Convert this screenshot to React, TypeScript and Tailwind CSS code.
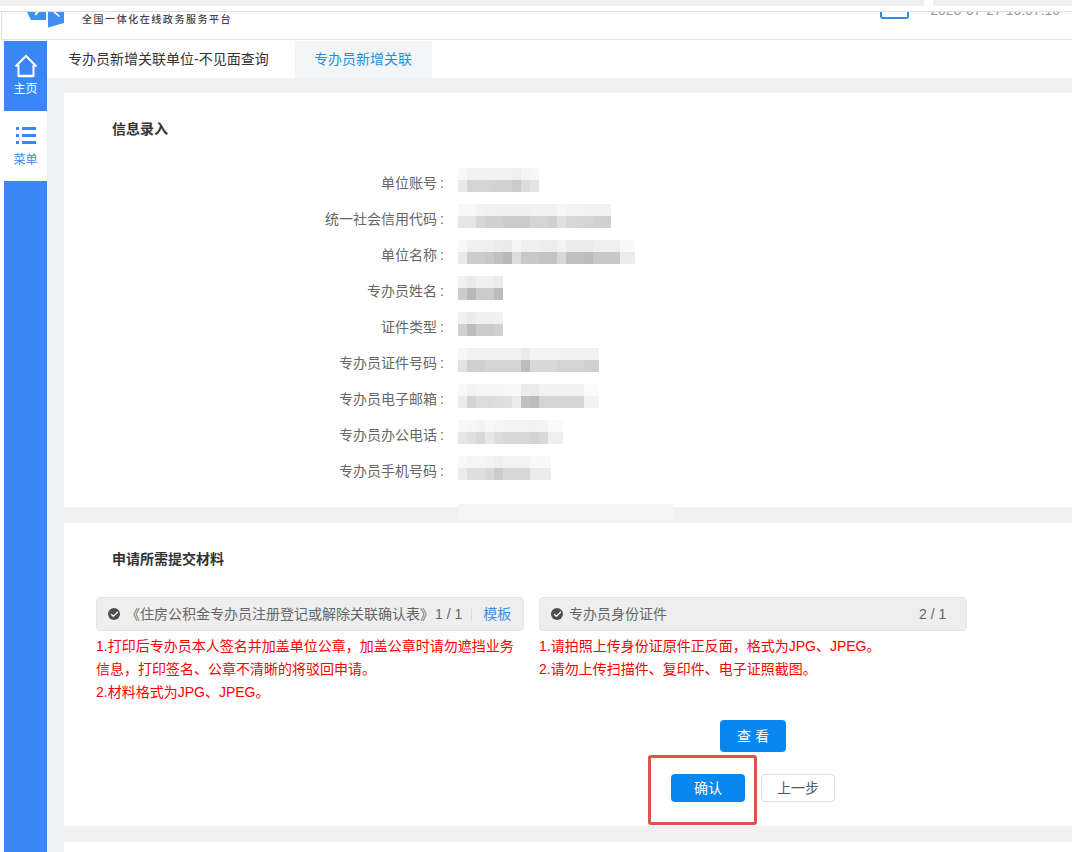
import { Check } from "lucide-react";

const rows = [
  { label: "单位账号", width: 81, cells: "e9 d4 d4 d4 d2 d2 cb dc e4" },
  { label: "统一社会信用代码", width: 153, cells: "e6 e6 d8 d0 d0 cc cc cc d4 d4 d0 e0 d8 d6 d4 d0 d0" },
  { label: "单位名称", width: 177, cells: "ea cc cc c8 c0 b8 dc c8 c8 c4 c4 d8 c0 c0 bc c8 c8 c8 ec ec" },
  { label: "专办员姓名", width: 45, cells: "cc b8 cc cc bc" },
  { label: "证件类型", width: 45, cells: "d0 bc cc cc d0" },
  { label: "专办员证件号码", width: 141, cells: "e2 d0 d0 d4 d4 d4 d4 bc d8 d8 d8 d4 d4 d4 d0 d0" },
  { label: "专办员电子邮箱", width: 141, cells: "ec d4 dc dc de e0 ec c0 bc d4 d4 d4 d4 d4 f2 f2" },
  { label: "专办员办公电话", width: 105, cells: "e6 e0 d8 e8 dc d8 d8 d8 d4 d8 ee ee" },
  { label: "专办员手机号码", width: 93, cells: "ec de de d8 cc d8 d8 d8 ec ec ec" },
];

const tone = (hex: string, top: boolean) => {
  const v = parseInt(hex, 16);
  const g = top ? Math.round(255 - (255 - v) * 0.3) : v;
  return `rgb(${g},${g},${g})`;
};

function BlurValue({ cells, width }: { cells: string; width: number }) {
  const list = cells.split(" ");
  return (
    <div className="ml-[14px] mt-[3px] h-[24px] overflow-hidden" style={{ width }}>
      <div className="flex">
        {list.map((c, i) => (
          <div key={i} className="w-[9px] h-[12px] shrink-0" style={{ backgroundColor: tone(c, true) }} />
        ))}
      </div>
      <div className="flex">
        {list.map((c, i) => (
          <div key={i} className="w-[9px] h-[12px] shrink-0" style={{ backgroundColor: tone(c, false) }} />
        ))}
      </div>
    </div>
  );
}

function CheckDot() {
  return (
    <span className="w-[12px] h-[12px] rounded-full bg-[#4f4f4f] flex items-center justify-center shrink-0">
      <Check size={9} strokeWidth={3.5} color="#ffffff" />
    </span>
  );
}

export default function App() {
  return (
    <div
      className="relative w-[1072px] h-[852px] overflow-hidden bg-white flex flex-col text-[14px] text-[#666]"
      style={{ fontFamily: '"Liberation Sans", "Noto Sans CJK SC", sans-serif' }}
    >
      {/* browser strip */}
      <div className="h-[6px] flex shrink-0">
        <div className="w-[924px] bg-[#efefef]" />
        <div className="w-[9px] bg-white" />
        <div className="flex-1 bg-[#efefef]" />
      </div>
      <div className="h-[6px] shrink-0 border-b border-[#dedede]" />

      {/* header, cut off at the top */}
      <div className="h-[28px] shrink-0 flex items-start overflow-hidden ml-[1px] border-l border-b border-[#e2e2e2]">
        <svg width="37" height="16" viewBox="0 0 37 16" className="ml-[25px] shrink-0">
          <path d="M0 0H19V8H4Z" fill="#3f8ff0" />
          <path d="M21 0H37V11L21 15.5Z" fill="#3f8ff0" />
          <path d="M9 0H12L9 3.5L7.5 2Z" fill="#ffffff" />
          <path d="M26 0H28.5L33 4L32 5Z" fill="#ffffff" />
        </svg>
        <span className="ml-[18px] mt-[1px] text-[10px] leading-[14px] tracking-[1.55px] font-medium text-[#444] whitespace-nowrap">
          全国一体化在线政务服务平台
        </span>
        <div className="ml-[648px] w-[29px] h-[7px] border-2 border-t-0 rounded-b-[3px] border-[#2b8fe3] shrink-0" />
        <span className="ml-[21px] -mt-[10px] leading-[16px] text-[#999] whitespace-nowrap">2023-07-27 10:07:10</span>
      </div>

      <div className="flex-1 flex min-h-0 pl-[4px] pt-[1px]">
        {/* sidebar */}
        <aside className="w-[43px] shrink-0 bg-[#3a86f6] flex flex-col text-[12px]">
          <div className="h-[70px] flex flex-col items-center pt-[13px] text-white">
            <svg width="24" height="24" viewBox="0 0 24 24" fill="none" stroke="#ffffff" strokeWidth="2">
              <path d="M1.5 12.5L12 2L22.5 12.5" />
              <path d="M4.5 11V22H19.5V11" />
              <path d="M4.5 22H19.5" strokeWidth="2.5" />
            </svg>
            <span className="leading-[16px] mt-[3px]">主页</span>
          </div>
          <div className="h-[70px] bg-white flex flex-col items-center pt-[16px] text-[#3a86f6]">
            <svg width="22" height="17" viewBox="0 0 22 17" fill="#3a86f6">
              <rect x="1" y="0" width="3" height="3" />
              <rect x="7" y="0" width="14" height="3" />
              <rect x="1" y="7" width="3" height="3" />
              <rect x="7" y="7" width="14" height="3" />
              <rect x="1" y="14" width="3" height="3" />
              <rect x="7" y="14" width="14" height="3" />
            </svg>
            <span className="leading-[16px] mt-[8px]">菜单</span>
          </div>
        </aside>

        <div className="flex-1 min-w-0 flex flex-col bg-[#f0f1f2]">
          {/* tabs */}
          <div className="h-[37px] shrink-0 bg-white flex items-center">
            <div className="w-[248px] pl-[21px] text-[#333]">专办员新增关联单位-不见面查询</div>
            <div className="w-[137px] h-full flex items-center pl-[19px] bg-[#f3f6f7] text-[#2290e0]">专办员新增关联</div>
          </div>

          <div className="flex-1 pt-[15px] pl-[17px] flex flex-col gap-[16px]">
            {/* info card */}
            <section className="relative bg-white h-[414px] shrink-0 pt-[26px]">
              <h2 className="pl-[48px] leading-[20px] font-bold text-[#333]">信息录入</h2>
              <div className="mt-[26px]">
                {rows.map((row) => (
                  <div key={row.label} className="flex h-[36px]">
                    <div className="w-[380px] text-right leading-[36px]">
                      {row.label}
                      <span className="ml-[3px]">:</span>
                    </div>
                    <BlurValue cells={row.cells} width={row.width} />
                  </div>
                ))}
              </div>
              <div className="absolute left-[394px] top-[411px] w-[215px] h-[16px] bg-[#f4f6f6]" />
            </section>

            {/* materials card */}
            <section className="bg-white h-[303px] shrink-0 pt-[26px]">
              <h2 className="pl-[48px] leading-[20px] font-bold text-[#333]">申请所需提交材料</h2>
              <div className="mt-[28px] ml-[32px] flex gap-[15px] items-start">
                <div className="w-[428px]">
                  <div className="h-[34px] flex items-center pl-[11px] bg-[#eeeeee] border border-[#e6e6e6] rounded-[4px]">
                    <CheckDot />
                    <span className="ml-[6px] whitespace-nowrap">《住房公积金专办员注册登记或解除关联确认表》</span>
                    <span className="ml-[1px] whitespace-nowrap">1 / 1</span>
                    <span className="ml-[9px] h-[14px] border-l border-[#dddddd]" />
                    <span className="ml-[11px] text-[#3a8ee6]">模板</span>
                  </div>
                  <p className="mt-[4px] text-[#ff0000] leading-[23px]">
                    1.打印后专办员本人签名并加盖单位公章，加盖公章时请勿遮挡业务信息，打印签名、公章不清晰的将驳回申请。
                    <br />
                    2.材料格式为JPG、JPEG。
                  </p>
                </div>
                <div className="w-[428px]">
                  <div className="h-[34px] flex items-center pl-[11px] bg-[#eeeeee] border border-[#e6e6e6] rounded-[4px]">
                    <CheckDot />
                    <span className="ml-[6px] whitespace-nowrap">专办员身份证件</span>
                    <span className="ml-[252px] whitespace-nowrap">2 / 1</span>
                  </div>
                  <p className="mt-[4px] text-[#ff0000] leading-[23px]">
                    1.请拍照上传身份证原件正反面，格式为JPG、JPEG。
                    <br />
                    2.请勿上传扫描件、复印件、电子证照截图。
                  </p>
                </div>
              </div>
              <div className="mt-[16px] pl-[607px]">
                <button className="ml-[49px] block w-[66px] h-[32px] rounded-[4px] bg-[#0a87ee] text-white">查 看</button>
                <div className="mt-[22px] flex gap-[16px]">
                  <button className="w-[74px] h-[28px] rounded-[4px] bg-[#0a87ee] text-white">确认</button>
                  <button className="w-[74px] h-[28px] rounded-[4px] bg-white border border-[#dddddd] text-[#555]">上一步</button>
                </div>
              </div>
            </section>

            <section className="bg-white flex-1" />
          </div>
        </div>
      </div>

      {/* red annotation box */}
      <div className="absolute left-[648px] top-[755px] w-[109px] h-[70px] border-[3px] border-[#e0524a] rounded-[3px]" />
    </div>
  );
}
